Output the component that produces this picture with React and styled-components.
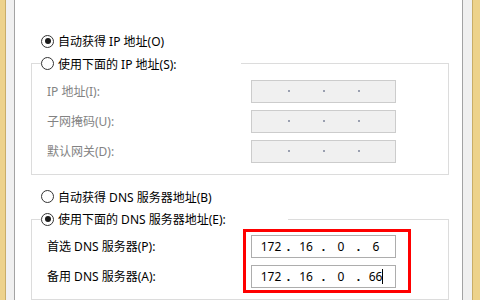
import React from 'react';
import styled, { createGlobalStyle } from 'styled-components';

const GlobalStyle = createGlobalStyle`
  html, body {
    margin: 0;
    padding: 0;
    background: #ffffff;
  }
  body {
    font-family: "Noto Sans", "Noto Sans CJK SC", sans-serif;
    font-size: 12px;
    color: #000000;
  }
`;

const ipGroup = [
  { label: 'IP 地址(I):' },
  { label: '子网掩码(U):' },
  { label: '默认网关(D):' },
];

const dnsGroup = [
  { label: '首选 DNS 服务器(P):', value: ['172', '16', '0', '6'] },
  { label: '备用 DNS 服务器(A):', value: ['172', '16', '0', '66'], focused: true },
];

const App = () => {
  return (
    <>
      <GlobalStyle />
      <Window>
        <Stripe />
        <Gutter $side="left" />
        <Content>
          <RadioRow>
            <Radio $checked />
            <span>自动获得 IP 地址(O)</span>
          </RadioRow>

          <Group>
            <Legend $width={200}>
              <Radio />
              <span>使用下面的 IP 地址(S):</span>
            </Legend>
            <FieldGrid>
              <LabelStack>
                {ipGroup.map((f) => (
                  <FieldLabel key={f.label} $disabled>{f.label}</FieldLabel>
                ))}
              </LabelStack>
              <InputStack>
                {ipGroup.map((f) => (
                  <IpBox key={f.label} $disabled>
                    {[0, 1, 2, 3].map((i) => (
                      <React.Fragment key={i}>
                        {i > 0 && <Dot $disabled />}
                        <Segment />
                      </React.Fragment>
                    ))}
                  </IpBox>
                ))}
              </InputStack>
            </FieldGrid>
          </Group>

          <RadioRow $top={12}>
            <Radio />
            <span>自动获得 DNS 服务器地址(B)</span>
          </RadioRow>

          <Group>
            <Legend $width={247}>
              <Radio $checked />
              <span>使用下面的 DNS 服务器地址(E):</span>
            </Legend>
            <FieldGrid>
              <LabelStack>
                {dnsGroup.map((f) => (
                  <FieldLabel key={f.label}>{f.label}</FieldLabel>
                ))}
              </LabelStack>
              <InputStack>
                <Highlight />
                {dnsGroup.map((f) => (
                  <IpBox key={f.label}>
                    {f.value.map((part, i) => (
                      <React.Fragment key={i}>
                        {i > 0 && <Dot>.</Dot>}
                        <Segment>
                          {part}
                          {f.focused && i === 3 && <Caret />}
                        </Segment>
                      </React.Fragment>
                    ))}
                  </IpBox>
                ))}
              </InputStack>
            </FieldGrid>
          </Group>
        </Content>
        <Gutter $side="right" />
        <Stripe $wide />
      </Window>
    </>
  );
};

const Window = styled.div`
  display: flex;
  width: 480px;
  height: 300px;
  overflow: hidden;
  background: #ffffff;
`;

const Stripe = styled.div`
  flex: 0 0 ${(p) => (p.$wide ? '8px' : '6px')};
  background: #edd28b;
  border-left: ${(p) => (p.$wide ? '1px solid #c9ad68' : 'none')};
  border-right: ${(p) => (p.$wide ? 'none' : '1px solid #c9ad68')};
  box-sizing: border-box;
`;

const Gutter = styled.div`
  flex: 0 0 ${(p) => (p.$side === 'left' ? '9px' : '10px')};
  box-sizing: border-box;
  background: #f0f0f0;
  border-right: ${(p) => (p.$side === 'left' ? '1px solid #a3a3a3' : 'none')};
  border-left: ${(p) => (p.$side === 'right' ? '1px solid #a3a3a3' : 'none')};
`;

const Content = styled.div`
  flex: 1;
  padding: 31px 13px 0 16px;
  display: flex;
  flex-direction: column;
  font-family: "Noto Sans", "Noto Sans CJK SC", sans-serif;
`;

const RadioRow = styled.div`
  display: flex;
  align-items: center;
  gap: 4px;
  height: 22px;
  margin: ${(p) => p.$top || 0}px 0 0 10px;
  color: #000000;
  white-space: nowrap;
`;

const Radio = styled.span`
  position: relative;
  flex: 0 0 13px;
  width: 13px;
  height: 13px;
  box-sizing: border-box;
  border: 1px solid #333333;
  border-radius: 50%;
  background: #ffffff;

  &::after {
    content: '';
    display: ${(p) => (p.$checked ? 'block' : 'none')};
    position: absolute;
    left: 2.5px;
    top: 2.5px;
    width: 6px;
    height: 6px;
    border-radius: 50%;
    background: #1a1a1a;
  }
`;

const Group = styled.fieldset`
  margin: 1px 0 0 0;
  padding: 5px 0 11px 9px;
  min-width: 0;
  width: 418px;
  box-sizing: border-box;
  border: 1px solid #dcdcdc;
`;

const Legend = styled.legend`
  display: flex;
  align-items: center;
  gap: 4px;
  width: ${(p) => p.$width}px;
  height: 22px;
  padding: 0;
  box-sizing: border-box;
  white-space: nowrap;
  color: #000000;
`;

const FieldGrid = styled.div`
  display: grid;
  grid-template-columns: 210px 145px;
`;

const LabelStack = styled.div`
  display: flex;
  flex-direction: column;
  gap: 7px;
`;

const FieldLabel = styled.div`
  height: 23px;
  line-height: 23px;
  padding-left: 6px;
  white-space: nowrap;
  color: ${(p) => (p.$disabled ? '#838383' : '#000000')};
`;

const InputStack = styled.div`
  position: relative;
  display: flex;
  flex-direction: column;
  gap: 7px;
`;

const IpBox = styled.div`
  display: flex;
  align-items: center;
  height: 23px;
  box-sizing: border-box;
  padding-left: 4px;
  border: 1px solid ${(p) => (p.$disabled ? '#cccccc' : '#adadad')};
  background: ${(p) => (p.$disabled ? '#f0f0f0' : '#ffffff')};
  font-family: "Noto Sans", sans-serif;
  font-size: 12px;
  color: #000000;
`;

const Segment = styled.span`
  display: inline-flex;
  justify-content: center;
  align-items: center;
  width: 30px;
  height: 100%;
`;

const Dot = styled.span`
  display: inline-flex;
  justify-content: center;
  width: 5px;
  line-height: 1;
  font-weight: bold;

  &::before {
    content: '';
    display: ${(p) => (p.$disabled ? 'block' : 'none')};
    width: 2px;
    height: 2px;
    background: #9aa0b0;
  }
`;

const Caret = styled.span`
  display: inline-block;
  width: 1px;
  height: 15px;
  background: #000000;
`;

const Highlight = styled.div`
  position: absolute;
  top: -6px;
  left: -8px;
  right: -15px;
  bottom: -5px;
  border: 3px solid #ff0000;
  pointer-events: none;
`;

export default App;
